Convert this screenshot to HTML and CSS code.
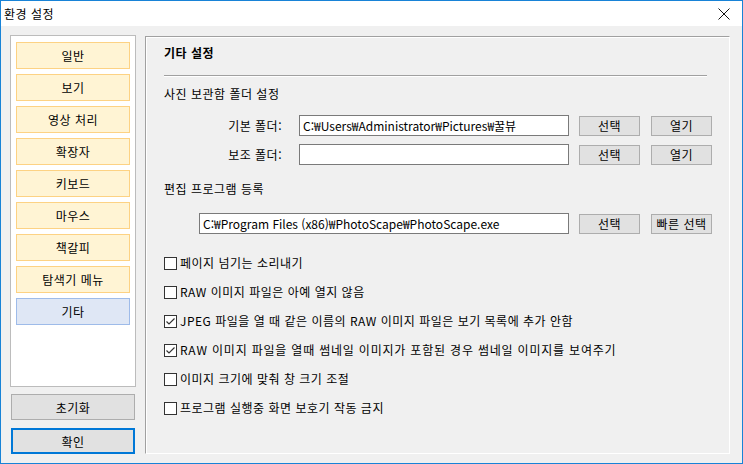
FILE: index.html
```html
<!DOCTYPE html>
<html lang="ko">
<head>
<meta charset="utf-8">
<title>환경 설정</title>
<link rel="stylesheet" href="styles.css">
</head>
<body>
<div class="window">
  <div class="titlebar">
    <span class="title">환경 설정</span>
    <svg class="close" width="12" height="12" viewBox="0 0 12 12"><path d="M0.5 0.5 L11.5 11.5 M11.5 0.5 L0.5 11.5" stroke="#111" stroke-width="1" fill="none"/></svg>
  </div>
  <div class="content">
    <div class="leftcol">
      <div class="navpanel">
        <div class="nav">일반</div>
        <div class="nav">보기</div>
        <div class="nav">영상 처리</div>
        <div class="nav">확장자</div>
        <div class="nav">키보드</div>
        <div class="nav">마우스</div>
        <div class="nav">책갈피</div>
        <div class="nav">탐색기 메뉴</div>
        <div class="nav selected">기타</div>
      </div>
      <div class="btn big reset">초기화</div>
      <div class="btn big ok">확인</div>
    </div>
    <div class="panel">
      <div class="heading">기타 설정</div>
      <div class="sep"></div>
      <div class="section">사진 보관함 폴더 설정</div>
      <div class="row first">
        <div class="label">기본 폴더:</div>
        <div class="input w270">C:₩Users₩Administrator₩Pictures₩꿀뷰</div>
        <div class="btn small">선택</div>
        <div class="btn small">열기</div>
      </div>
      <div class="row second">
        <div class="label">보조 폴더:</div>
        <div class="input w270"></div>
        <div class="btn small">선택</div>
        <div class="btn small">열기</div>
      </div>
      <div class="section sec2">편집 프로그램 등록</div>
      <div class="row third">
        <div class="input w370">C:₩Program Files (x86)₩PhotoScape₩PhotoScape.exe</div>
        <div class="btn small">선택</div>
        <div class="btn small">빠른 선택</div>
      </div>
      <div class="checks">
        <div class="check"><span class="box"></span>페이지 넘기는 소리내기</div>
        <div class="check"><span class="box"></span>RAW 이미지 파일은 아예 열지 않음</div>
        <div class="check"><span class="box"><svg width="11" height="11" viewBox="0 0 11 11"><path d="M1.5 5.5 L4 8 L9.5 2.5" stroke="#333" stroke-width="1.2" fill="none"/></svg></span>JPEG 파일을 열 때 같은 이름의 RAW 이미지 파일은 보기 목록에 추가 안함</div>
        <div class="check wide"><span class="box"><svg width="11" height="11" viewBox="0 0 11 11"><path d="M1.5 5.5 L4 8 L9.5 2.5" stroke="#333" stroke-width="1.2" fill="none"/></svg></span>RAW 이미지 파일을 열때 썸네일 이미지가 포함된 경우 썸네일 이미지를 보여주기</div>
        <div class="check"><span class="box"></span>이미지 크기에 맞춰 창 크기 조절</div>
        <div class="check"><span class="box"></span>프로그램 실행중 화면 보호기 작동 금지</div>
      </div>
    </div>
  </div>
</div>
</body>
</html>
```

FILE: styles.css
```css
* { box-sizing: border-box; }
html, body { margin: 0; padding: 0; }
body {
  font-family: "Noto Sans CJK KR", "Noto Sans", sans-serif;
  font-size: 12px;
  letter-spacing: 0.5px;
  color: #000;
  background: #fff;
}
.window {
  width: 743px;
  height: 464px;
  border: 1px solid #1883d7;
  background: #f0f0f0;
  display: flex;
  flex-direction: column;
}
.titlebar {
  height: 25px;
  background: #fff;
  display: flex;
  align-items: center;
  justify-content: space-between;
  padding: 0 12px 0 3px;
}
.title { font-size: 12px; line-height: 18px; }
.close { display: block; }
.content {
  flex: 1;
  display: flex;
  padding: 9px 12px 9px 9px;
  gap: 9px;
  min-width: 0;
}
.leftcol {
  width: 126px;
  flex: 0 0 126px;
  display: flex;
  flex-direction: column;
}
.navpanel {
  height: 352px;
  background: #fff;
  border: 1px solid #bcbcbc;
  padding: 6px 5px;
  display: flex;
  flex-direction: column;
  gap: 5px;
}
.nav {
  height: 27px;
  background: #fff4d4;
  border: 1px solid #fdd283;
  display: flex;
  align-items: center;
  justify-content: center;
}
.nav.selected {
  background: #dfe7f5;
  border-color: #9ebbe9;
}
.btn {
  background: #e1e1e1;
  border: 1px solid #adadad;
  display: flex;
  align-items: center;
  justify-content: center;
  white-space: nowrap;
}
.big { height: 26px; margin-left: 1px; margin-right: 1px; }
.reset { margin-top: 7px; }
.ok { margin-top: 8px; border: 2px solid #0078d7; }
.panel {
  flex: 1 1 auto;
  min-width: 0;
  margin-top: 1px;
  border-top: 1px solid #a0a0a0;
  border-left: 1px solid #a0a0a0;
  border-right: 1px solid #fff;
  border-bottom: 1px solid #fff;
  box-shadow: inset 1px 1px 0 #fff;
  padding: 7px 22px 0 18px;
  display: flex;
  flex-direction: column;
  overflow: hidden;
}
.heading { font-weight: bold; font-size: 12px; line-height: 18px; }
.sep {
  margin-top: 13px;
  height: 2px;
  border-top: 1px solid #a0a0a0;
  border-bottom: 1px solid #fff;
}
.section { margin-top: 8px; line-height: 18px; }
.sec2 { margin-top: 15px; }
.row { display: flex; align-items: center; height: 21px; }
.row.first { margin-top: 12px; }
.row.second { margin-top: 8px; }
.row.third { margin-top: 15px; padding-left: 35px; }
.label { width: 118px; flex: 0 0 118px; text-align: right; margin-right: 17px; }
.input {
  height: 21px;
  background: #fff;
  border: 1px solid #7a7a7a;
  padding: 0 0 0 3px;
  line-height: 19px;
  white-space: nowrap;
  overflow: hidden;
  flex: 0 0 auto;
  letter-spacing: 0;
}
.w270 { width: 270px; }
.w370 { width: 370px; }
.btn.small { width: 61px; flex: 0 0 61px; height: 20px; margin-left: 10px; }
.btn.small + .btn.small { margin-left: 11px; }
.checks {
  margin-top: 20px;
  display: flex;
  flex-direction: column;
  gap: 11px;
}
.check { display: flex; align-items: center; line-height: 18px; height: 18px; white-space: nowrap; }
.check.wide { letter-spacing: 0.8px; }
.box {
  width: 13px;
  height: 13px;
  flex: 0 0 13px;
  border: 1px solid #333;
  background: #fff;
  margin-right: 3px;
  display: flex;
  align-items: center;
  justify-content: center;
}
.box svg { display: block; }
```
